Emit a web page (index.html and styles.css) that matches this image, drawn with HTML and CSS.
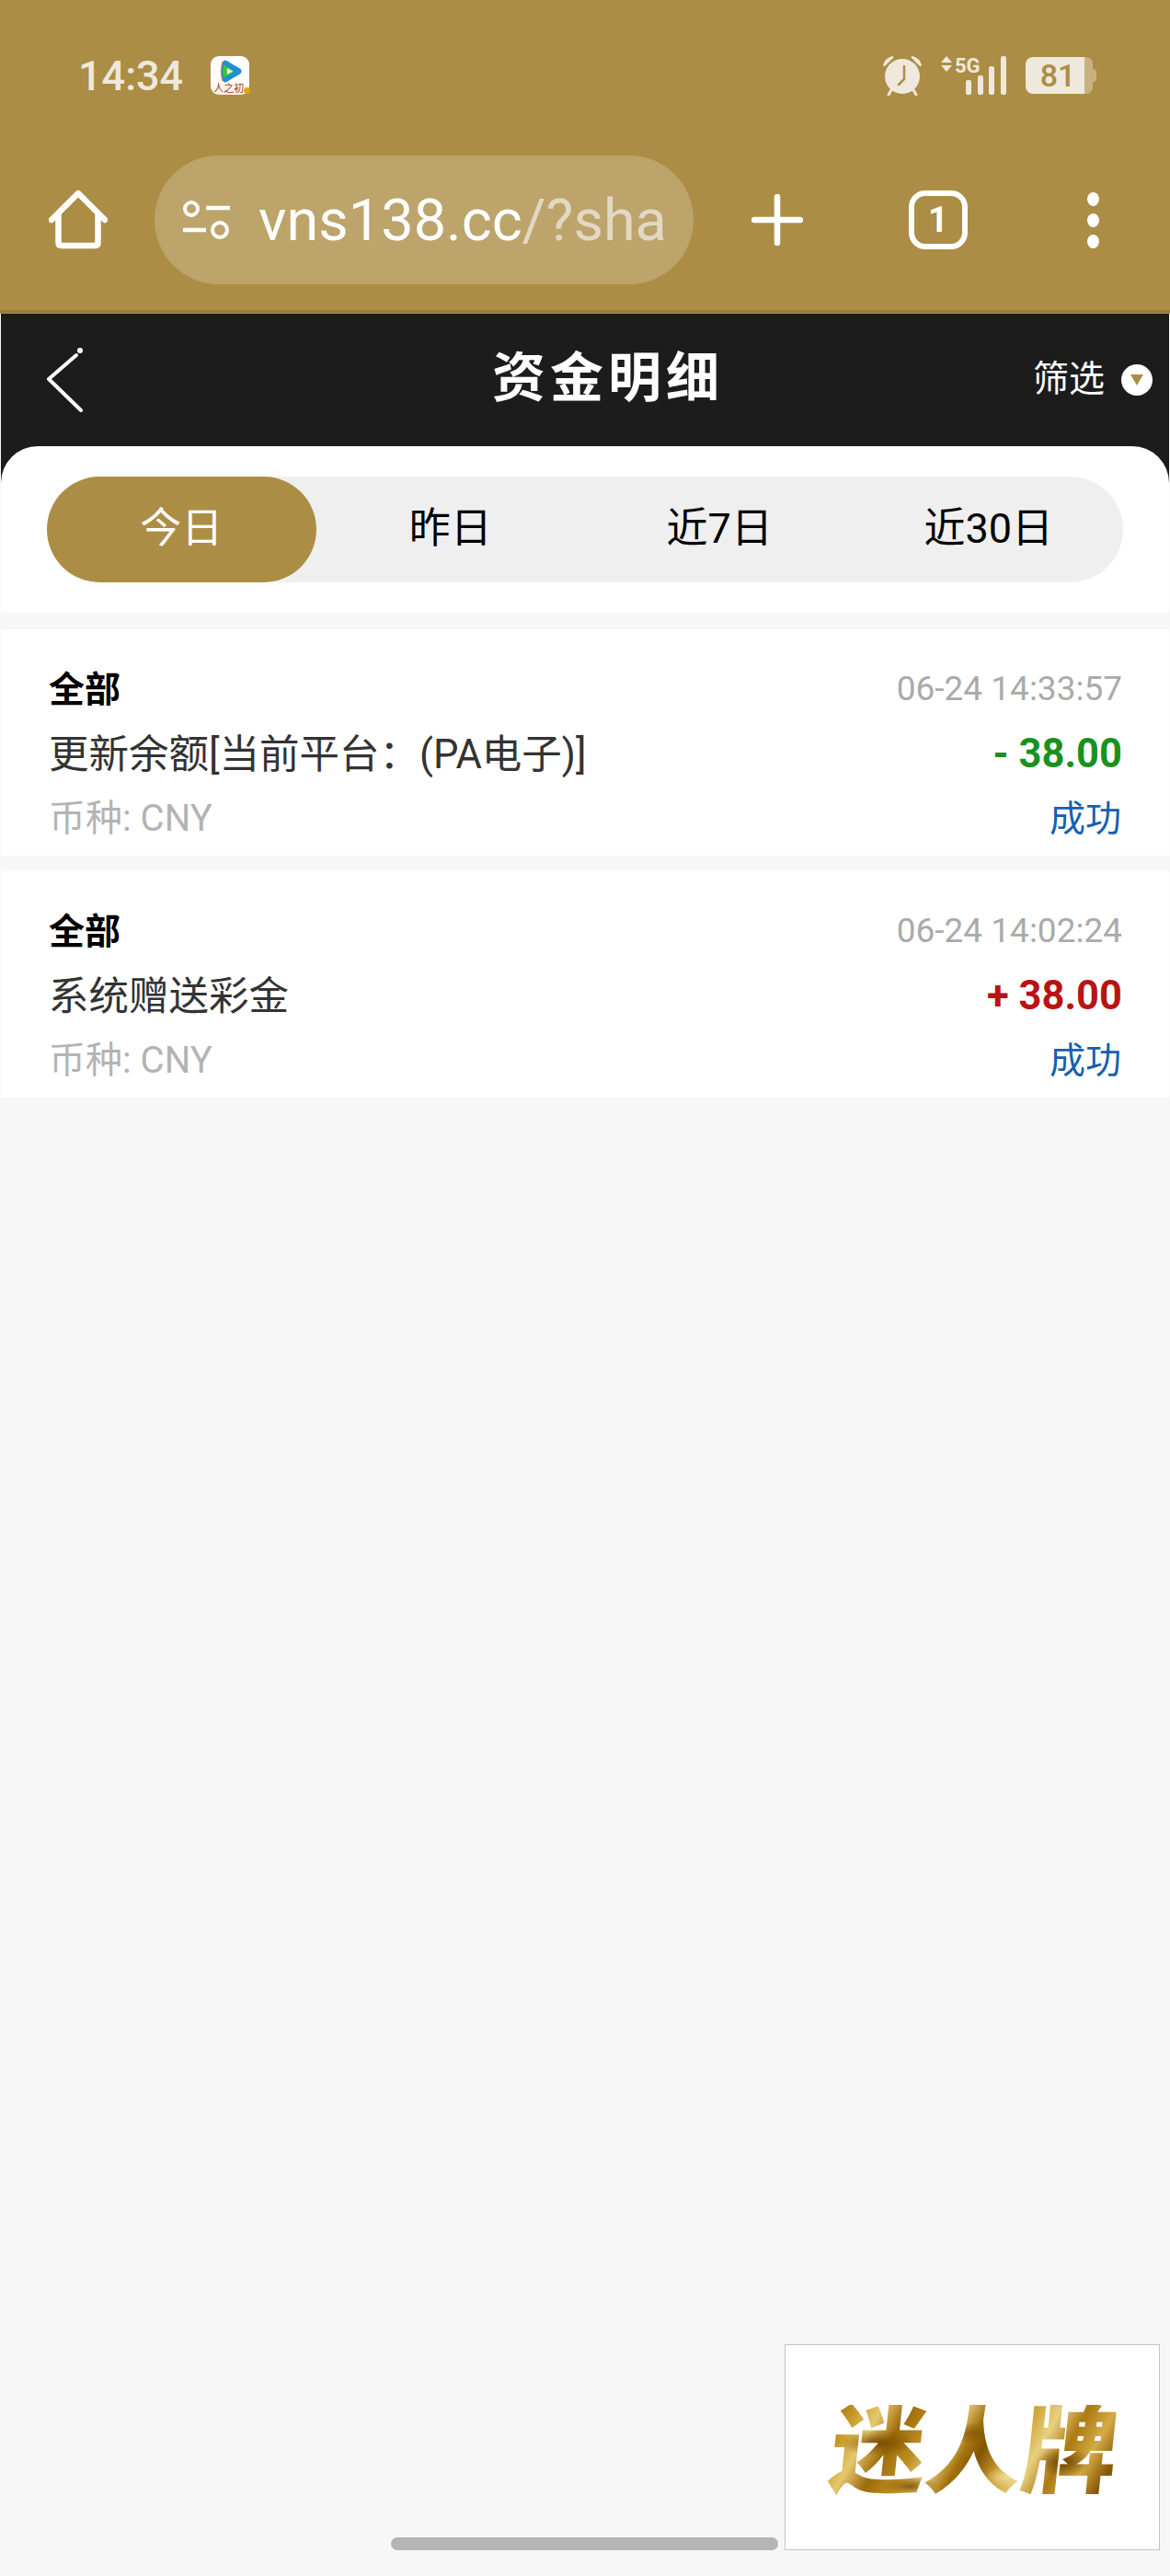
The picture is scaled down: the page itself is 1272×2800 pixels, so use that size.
FILE: index.html
```html
<!DOCTYPE html>
<html lang="zh-CN">
<head>
  <meta charset="UTF-8">
  <meta name="viewport" content="width=device-width, initial-scale=1.0">
  <title>资金明细</title>
  <link rel="stylesheet" href="styles.css">
</head>
<body>
  <!-- Phone status bar and browser toolbar -->
  <header class="chrome">
    <div class="status-bar">
      <span class="clock">14:34</span>
      <div class="app-icon">
        <svg class="app-play" width="27" height="27" viewBox="0 0 30 28">
          <path d="M5 2 Q1 14 5 26 L13 26 L13 2 Z" fill="#e08a1e"/>
          <path d="M6 3 Q7 0 10 1 L27 11 Q30 14 27 17 L10 27 Q7 28 6 25 Q3 14 6 3 Z" fill="#1f8fd8"/>
          <path d="M7 6 Q5 14 7 22 L20 14 Z" fill="#3cc43c"/>
          <path d="M11 10 L11 18 L18 14 Z" fill="#e9fbe0"/>
        </svg>
        <span class="app-label">人之初</span>
        <span class="app-badge"></span>
      </div>
      <div class="status-icons">
        <svg width="44" height="44" viewBox="0 0 44 44">
          <path d="M1 11 Q3 3 11 1 Q13 1 12 3 L4 11 Q2 13 1 11 Z M43 11 Q41 3 33 1 Q31 1 32 3 L40 11 Q42 13 43 11 Z" fill="#efe8dc"/>
          <path d="M11 36 L7 43 M33 36 L37 43" stroke="#efe8dc" stroke-width="3" stroke-linecap="round"/>
          <circle cx="22" cy="23" r="19" fill="#efe8dc"/>
          <path d="M24 12 L24 26 L18 32" fill="none" stroke="#ac8d45" stroke-width="2.5" stroke-linecap="round"/>
        </svg>
        <svg class="signal" width="72" height="44" viewBox="0 0 72 44">
          <path d="M7 1 L13 8 L1 8 Z M1 11 L13 11 L7 18 Z" fill="#efe8dc"/>
          <text x="16" y="19" class="signal-text">5G</text>
          <rect x="28" y="27" width="6" height="16" rx="2" fill="#efe8dc"/>
          <rect x="41" y="22" width="6" height="21" rx="2" fill="#efe8dc"/>
          <rect x="53" y="12" width="6" height="31" rx="2" fill="#efe8dc"/>
          <rect x="66" y="1" width="6" height="42" rx="2" fill="#efe8dc"/>
        </svg>
        <div class="battery">
          <span class="battery-level">81</span>
          <span class="battery-rest"></span>
          <span class="battery-tip"></span>
        </div>
      </div>
    </div>
    <div class="toolbar">
      <svg class="home-icon" width="64" height="64" viewBox="0 0 64 64">
        <path d="M3 32 L32 3 L61 32 M10.5 26 L10.5 57 Q10.5 60 14 60 L50 60 Q53.5 60 53.5 57 L53.5 26" fill="none" stroke="#fff" stroke-width="6.5" stroke-linecap="round" stroke-linejoin="round"/>
      </svg>
      <div class="address">
        <svg class="tune-icon" width="52" height="44" viewBox="0 0 52 44">
          <circle cx="10" cy="10" r="7" fill="none" stroke="#fff" stroke-width="4"/>
          <path d="M26 9 L52 9 M1 33 L26 33" stroke="#fff" stroke-width="4.5"/>
          <circle cx="41" cy="33" r="8" fill="none" stroke="#fff" stroke-width="4"/>
        </svg>
        <span class="url">vns138.cc<span class="url-rest">/?sha</span></span>
      </div>
      <svg class="plus-icon" width="56" height="56" viewBox="0 0 56 56">
        <path d="M28 3 L28 53 M3 28 L53 28" stroke="#fff" stroke-width="6.5" stroke-linecap="round"/>
      </svg>
      <div class="tab-count">1</div>
      <div class="more">
        <span></span><span></span><span></span>
      </div>
    </div>
  </header>

  <main class="page">
    <div class="sheet">
      <div class="title-bar">
        <svg class="back" width="40" height="70" viewBox="0 0 40 70">
          <path d="M32 8 L2 34 L37 68" fill="none" stroke="#fff" stroke-width="4" stroke-linecap="round" stroke-linejoin="round"/>
          <circle cx="36" cy="3" r="3" fill="#fff"/>
        </svg>
        <h1 class="title">资金明细</h1>
        <div class="filter">
          <span class="filter-label">筛选</span>
          <span class="filter-dot"><i></i></span>
        </div>
      </div>
      <div class="panel">
        <div class="tabs">
          <div class="tab active">今日</div>
          <div class="tab">昨日</div>
          <div class="tab">近7日</div>
          <div class="tab">近30日</div>
        </div>
      </div>
    </div>

    <section class="record">
      <div class="row">
        <span class="kind">全部</span>
        <span class="time">06-24 14:33:57</span>
      </div>
      <div class="row">
        <span class="desc">更新余额[当前平台：(PA电子)]</span>
        <span class="amount minus">- 38.00</span>
      </div>
      <div class="row">
        <span class="currency">币种: CNY</span>
        <span class="state">成功</span>
      </div>
    </section>

    <section class="record">
      <div class="row">
        <span class="kind">全部</span>
        <span class="time">06-24 14:02:24</span>
      </div>
      <div class="row">
        <span class="desc">系统赠送彩金</span>
        <span class="amount plus">+ 38.00</span>
      </div>
      <div class="row">
        <span class="currency">币种: CNY</span>
        <span class="state">成功</span>
      </div>
    </section>
  </main>

  <!-- Floating brand box and gesture bar sit over the page -->
  <div class="home-bar"></div>
  <div class="promo"><span class="promo-text">迷人牌</span></div>
</body>
</html>
```

FILE: styles.css
```css
* {
  box-sizing: border-box;
}

body {
  margin: 0;
  position: relative;
  width: 1272px;
  height: 2800px;
  overflow: hidden;
  background-color: #f7f7f7;
  font-family: Roboto, "Noto Sans CJK SC", sans-serif;
}

/* Status bar + browser toolbar */
.chrome {
  height: 341px;
  background-color: #ac8d45;
  box-shadow: inset 0 -1px 0 #ac8d45, inset 0 -4px 0 #96803f;
}

.status-bar {
  display: flex;
  align-items: center;
  height: 164px;
  padding: 0 80px 0 85px;
}

.clock {
  font-size: 45px;
  font-weight: 500;
  color: #efe8dc;
}

.app-icon {
  position: relative;
  width: 42px;
  height: 42px;
  margin-left: 30px;
  border-radius: 9px;
  background: linear-gradient(#fff 60%, #fbeee0);
}

.app-play {
  position: absolute;
  top: 3px;
  left: 8px;
}

.app-label {
  position: absolute;
  left: 3px;
  bottom: 0;
  font-size: 11px;
  line-height: 12px;
  color: #9c3d1c;
  white-space: nowrap;
}

.app-badge {
  position: absolute;
  right: -1px;
  bottom: 1px;
  width: 7px;
  height: 7px;
  border-radius: 50%;
  background-color: #e0a51c;
}

.status-icons {
  display: flex;
  align-items: center;
  margin-left: auto;
}

.signal {
  margin-left: 19px;
}

.signal-text {
  font-family: Roboto, sans-serif;
  font-size: 22px;
  font-weight: 700;
  fill: #efe8dc;
}

.battery {
  display: flex;
  align-items: center;
  height: 40px;
  margin-left: 21px;
}

.battery-level {
  width: 64px;
  height: 40px;
  padding-left: 6px;
  border-radius: 8px 0 0 8px;
  background-color: #efe8dc;
  color: #ac8d45;
  font-size: 34px;
  font-weight: 500;
  line-height: 40px;
  text-align: center;
}

.battery-rest {
  width: 9px;
  height: 40px;
  border-radius: 0 7px 7px 0;
  background-color: #c7b27f;
}

.battery-tip {
  width: 4px;
  height: 14px;
  border-radius: 0 4px 4px 0;
  background-color: #c7b27f;
}

.toolbar {
  display: flex;
  align-items: center;
  height: 150px;
  padding-left: 53px;
}

.home-icon {
  flex-shrink: 0;
}

.address {
  display: flex;
  align-items: center;
  width: 586px;
  height: 140px;
  margin-left: 51px;
  padding-left: 30px;
  border-radius: 70px;
  background-color: #bca46b;
  overflow: hidden;
}

.tune-icon {
  flex-shrink: 0;
}

.url {
  margin-left: 31px;
  font-size: 63px;
  color: #fff;
  white-space: nowrap;
}

.url-rest {
  color: #e2d8c3;
}

.plus-icon {
  margin-left: 63px;
}

.tab-count {
  display: flex;
  align-items: center;
  justify-content: center;
  width: 64px;
  height: 64px;
  margin-left: 115px;
  border: 6px solid #fff;
  border-radius: 18px;
  color: #fff;
  font-size: 38px;
  font-weight: 700;
}

.more {
  display: flex;
  flex-direction: column;
  gap: 8px;
  margin-left: 130px;
}

.more span {
  width: 13px;
  height: 15px;
  border-radius: 50%;
  background-color: #fff;
}

/* Page content */
.page {
  padding: 0 1px;
}

.sheet {
  background-color: #1c1c1c;
}

.title-bar {
  display: flex;
  align-items: center;
  height: 144px;
  padding: 0 18px 0 50px;
}

.back {
  flex-shrink: 0;
}

.title {
  margin: 0 0 0 444px;
  padding-bottom: 14px;
  color: #fff;
  font-size: 58px;
  font-weight: 700;
  letter-spacing: 5px;
}

.filter {
  display: flex;
  align-items: center;
  gap: 18px;
  margin-left: auto;
  color: #fff;
  font-size: 39px;
}

.filter-label {
  padding-bottom: 10px;
}

.filter-dot {
  display: flex;
  align-items: center;
  justify-content: center;
  width: 34px;
  height: 34px;
  border-radius: 50%;
  background-color: #fff;
}

.filter-dot i {
  width: 0;
  height: 0;
  border-left: 7px solid transparent;
  border-right: 7px solid transparent;
  border-top: 12px solid #ac8d45;
}

.panel {
  padding: 33px 50px;
  border-radius: 40px 40px 0 0;
  background-color: #fff;
}

.tabs {
  display: grid;
  grid-template-columns: repeat(4, 1fr);
  height: 115px;
  border-radius: 58px;
  background-color: #efefef;
}

.tab {
  display: flex;
  align-items: center;
  justify-content: center;
  padding-bottom: 10px;
  border-radius: 58px;
  color: #000;
  font-size: 45px;
}

.tab.active {
  background-color: #ac8d45;
  color: #fff;
}

.record {
  height: 246px;
  margin-top: 18px;
  padding: 30px 51px 0 52px;
  background-color: #fff;
}

.record + .record {
  margin-top: 17px;
}

.row {
  display: flex;
  align-items: center;
  justify-content: space-between;
  height: 70px;
}

.kind {
  padding-bottom: 6px;
  color: #000;
  font-size: 39px;
  font-weight: 700;
}

.time {
  padding-bottom: 2px;
  color: #aaa;
  font-size: 37px;
}

.desc {
  padding-bottom: 6px;
  color: #333;
  font-size: 43.5px;
}

.amount {
  font-size: 43.5px;
  font-weight: 700;
}

.amount.minus {
  color: #1a911f;
}

.amount.plus {
  color: #b81414;
}

.currency {
  padding-bottom: 6px;
  color: #b3b3b3;
  font-size: 40px;
}

.state {
  margin-right: 1px;
  padding-bottom: 6px;
  color: #1560b0;
  font-size: 39px;
}

.home-bar {
  position: absolute;
  left: 425px;
  top: 2758px;
  width: 421px;
  height: 14px;
  border-radius: 7px;
  background-color: #b5b5b5;
}

.promo {
  position: absolute;
  left: 853px;
  top: 2548px;
  display: flex;
  align-items: center;
  justify-content: center;
  width: 408px;
  height: 224px;
  border: 1px solid #c4c4c4;
  background-color: #fff;
}

.promo-text {
  display: inline-block;
  margin-top: 12px;
  margin-left: 4px;
  padding: 0 8px;
  font-size: 104px;
  font-weight: 900;
  line-height: 1;
  white-space: nowrap;
  transform: skewX(-6deg);
  color: transparent;
  background:
    radial-gradient(ellipse 40px 14px at 18% 40%, #7a4e04, transparent),
    radial-gradient(ellipse 36px 12px at 50% 30%, #8a5c08, transparent),
    radial-gradient(ellipse 30px 16px at 80% 60%, #6e4804, transparent),
    radial-gradient(ellipse 30px 10px at 30% 85%, #8a5c08, transparent),
    radial-gradient(ellipse 26px 12px at 62% 75%, #f0dc98, transparent),
    linear-gradient(115deg, #966404 0%, #c89a28 9%, #e6c870 16%, #9c6a0a 24%, #bc8c20 32%, #e8d080 40%, #a4720e 47%, #825404 52%, #cc9e30 60%, #e8d080 68%, #ac7a14 76%, #d4ac44 84%, #845606 92%, #bc8a20 100%);
  -webkit-background-clip: text;
  background-clip: text;
}
```
